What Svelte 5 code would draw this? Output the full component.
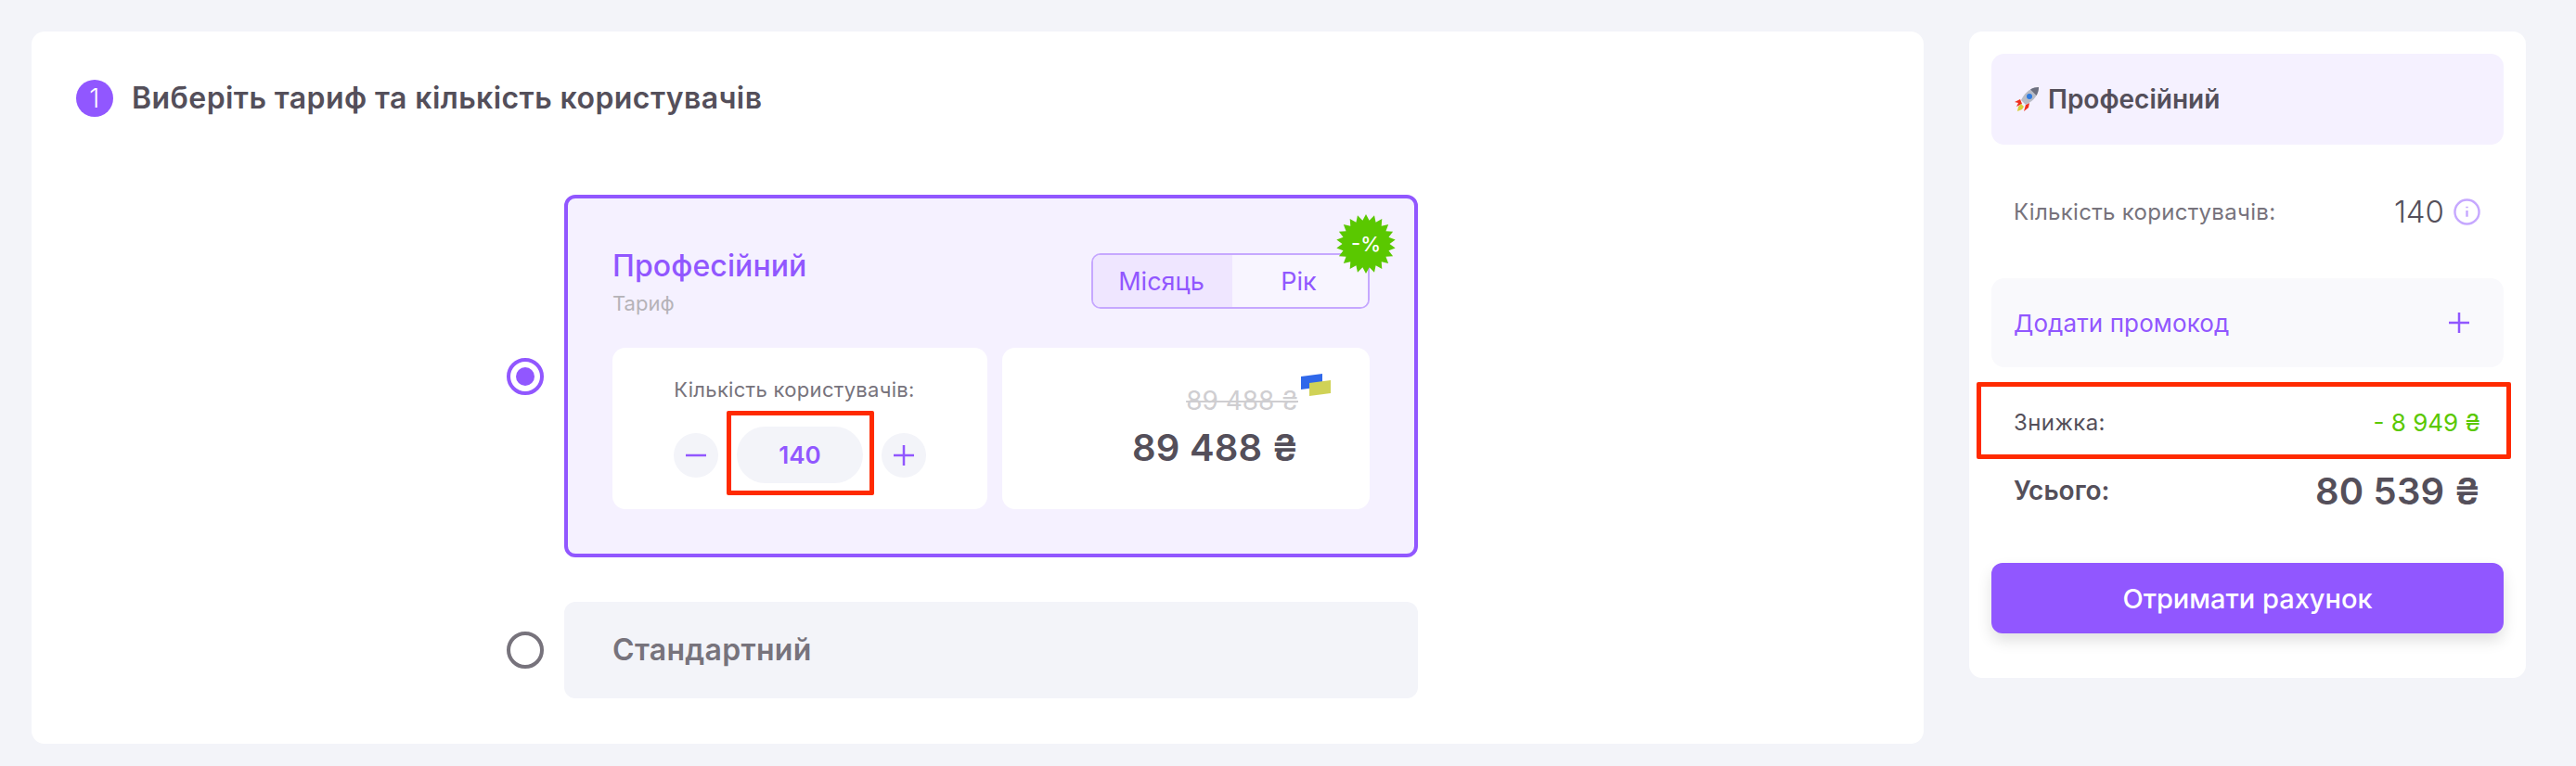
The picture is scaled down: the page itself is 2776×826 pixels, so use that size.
<script>
let months = $state(true)
let users = $state(140)

const price = 89488
const discount = 8949

function money(n) {
  return String(n).replace(/\B(?=(\d{3})+$)/g, ' ') + ' ₴'
}

// badge outline, alternating outer and inner radius
function burst(count, outer, inner) {
  const pts = []
  for (let i = 0; i < count * 2; i++) {
    const r = i % 2 ? inner : outer
    const a = (Math.PI * i) / count - Math.PI / 2
    pts.push((32 + r * Math.cos(a)).toFixed(2) + ',' + (32 + r * Math.sin(a)).toFixed(2))
  }
  return pts.join(' ')
}
</script>

<div class="page">
  <main class="card main">
    <h2 class="heading"><span class="step">1</span>Виберіть тариф та кількість користувачів</h2>

    <div class="plans">
      <div class="plan-row">
        <span class="radio active"></span>
        <section class="plan">
          <svg class="badge" viewBox="0 0 64 64" aria-hidden="true">
            <polygon points={burst(22, 32, 25.5)} fill="#5ac800" />
          </svg>
          <span class="badge-text">-%</span>

          <div class="plan-head">
            <div class="plan-name">
              <div class="plan-title">Професійний</div>
              <div class="plan-sub">Тариф</div>
            </div>
            <div class="period">
              <button class:on={months} onclick={() => months = true}>Місяць</button>
              <button class:on={!months} onclick={() => months = false}>Рік</button>
            </div>
          </div>

          <div class="plan-body">
            <div class="box qty">
              <div class="qty-label">Кількість користувачів:</div>
              <div class="qty-controls">
                <button class="round" onclick={() => users--} aria-label="minus">
                  <svg viewBox="0 0 22 22"><path d="M0 11h22" /></svg>
                </button>
                <span class="qty-value">{users}</span>
                <button class="round" onclick={() => users++} aria-label="plus">
                  <svg viewBox="0 0 22 22"><path d="M0 11h22M11 0v22" /></svg>
                </button>
              </div>
            </div>

            <div class="box prices">
              <div class="old-price">
                {money(price)}
                <svg class="flag" viewBox="0 0 32 24" aria-hidden="true">
                  <polygon points="0,3 23,0 23,14 0,17" fill="#3068ea" />
                  <polygon points="9,10 32,7 32,21 9,24" fill="#d0d256" />
                </svg>
              </div>
              <div class="new-price">{money(price)}</div>
            </div>
          </div>
        </section>
      </div>

      <div class="plan-row">
        <span class="radio"></span>
        <section class="plan-closed">Стандартний</section>
      </div>
    </div>
  </main>

  <aside class="card side">
    <div class="side-head">
      <svg class="rocket" viewBox="0 0 28 28" aria-hidden="true">
        <path d="M7 14 1 17l4 1-2 4 6-3z" fill="#f0301e" />
        <path d="M13 20l-2 7 5-4 1-5z" fill="#f0301e" />
        <path d="M5 22l-1 5 5-2 2-3-3-3z" fill="#d8cf3c" />
        <path d="M27 1c-7 0-14 4-19 14l5 5C23 15 27 8 27 1z" fill="#b9bcc6" />
        <path d="M27 1c-3 0-6 .8-9 2.400L24.600 10C26.200 7 27 4 27 1z" fill="#6d7080" />
        <circle cx="17" cy="11" r="3" fill="#2f7be0" />
      </svg>
      Професійний
    </div>

    <div class="row users">
      <span class="users-label">Кількість користувачів:</span>
      <span class="users-value">
        {users}
        <svg class="info" viewBox="0 0 30 30" aria-hidden="true">
          <circle cx="15" cy="15" r="13.500" />
          <path d="M15 13.500v7M15 9v1.500" />
        </svg>
      </span>
    </div>

    <div class="promo">
      Додати промокод
      <svg viewBox="0 0 22 22" aria-hidden="true"><path d="M0 11h22M11 0v22" /></svg>
    </div>

    <div class="row discount">
      <span>Знижка:</span>
      <span class="discount-value">- {money(discount)}</span>
    </div>

    <div class="row total">
      <span>Усього:</span>
      <span class="total-value">{money(price - discount)}</span>
    </div>

    <button class="submit">Отримати рахунок</button>
  </aside>

  <!-- red annotation frames from the screenshot -->
  <div class="mark mark-qty"></div>
  <div class="mark mark-discount"></div>
</div>

<style>
:global(body) {
  margin: 0;
  background: #f3f4f9;
  font-family: Inter, "Noto Sans", sans-serif;
  color: #544f5a;
}

button {
  font: inherit;
  border: 0;
  padding: 0;
  cursor: pointer;
}

.page {
  position: relative;
  display: flex;
  align-items: flex-start;
  gap: 49px;
  padding: 34px;
  width: 2776px;
  height: 826px;
  box-sizing: border-box;
}

.card {
  background: #fff;
  border-radius: 14px;
  box-sizing: border-box;
}

.main {
  width: 2039px;
  padding: 52px 48px 49px;
}

.heading {
  display: flex;
  align-items: center;
  gap: 20px;
  margin: 0;
  font-size: 32px;
  line-height: 40px;
  font-weight: 600;
  letter-spacing: 0.42px;
}

.step {
  width: 40px;
  height: 40px;
  border-radius: 50%;
  background: #9157ff;
  color: #fff;
  font-size: 28px;
  font-weight: 300;
  text-align: center;
}

.plans {
  display: flex;
  flex-direction: column;
  gap: 48px;
  width: 982px;
  margin: 84px 0 0 464px;
}

.plan-row {
  display: flex;
  align-items: center;
  gap: 22px;
}

.radio {
  flex: none;
  width: 40px;
  height: 40px;
  border: 4px solid #77737c;
  border-radius: 50%;
  box-sizing: border-box;
  background: #fff;
}

.radio.active {
  border-color: #9157ff;
  padding: 6px;
  background: #9157ff content-box;
}

.plan {
  position: relative;
  flex: 1;
  padding: 59px 48px 48px;
  border: 4px solid #9157ff;
  border-radius: 12px;
  background: #f5f1ff;
}

.badge {
  position: absolute;
  top: 17px;
  right: 20px;
  width: 64px;
  height: 64px;
  z-index: 1;
}

.badge-text {
  position: absolute;
  top: 17px;
  right: 20px;
  z-index: 1;
  width: 64px;
  color: #fff;
  font-size: 22px;
  line-height: 64px;
  font-weight: 500;
  text-align: center;
}

.plan-head {
  display: flex;
  justify-content: space-between;
  align-items: flex-start;
}

.plan-name {
  margin: -6px 0 -8px;
}

.plan-title {
  color: #9157ff;
  font-size: 32px;
  line-height: 40px;
  font-weight: 500;
  letter-spacing: 0.1px;
}

.plan-sub {
  margin-top: 6px;
  color: #b5b3b8;
  font-size: 22px;
  line-height: 28px;
}

.period {
  display: flex;
  width: 300px;
  height: 60px;
  border: 2px solid #c6a8ff;
  border-radius: 10px;
  box-sizing: border-box;
  overflow: hidden;
}

.period button {
  padding-right: 3px;
  color: #9157ff;
  background: #f8f5ff;
  font-size: 27px;
}

.period button:first-child {
  width: 150px;
}

.period button:last-child {
  flex: 1;
}

.period button.on {
  background: #efe6ff;
}

.plan-body {
  display: flex;
  gap: 16px;
  margin-top: 42px;
}

.box {
  height: 174px;
  border-radius: 14px;
  background: #fff;
  box-sizing: border-box;
}

.qty {
  width: 404px;
  padding-top: 31px;
}

.qty-label {
  padding-right: 12px;
  color: #77737c;
  font-size: 22px;
  line-height: 28px;
  letter-spacing: 0.3px;
  text-align: center;
}

.qty-controls {
  display: flex;
  justify-content: center;
  align-items: center;
  gap: 20px;
  margin-top: 26px;
}

.round {
  width: 48px;
  height: 48px;
  border-radius: 50%;
  background: #f3f4f9;
}

.round svg {
  display: block;
  width: 22px;
  height: 22px;
  margin: auto;
}

.round path,
.promo path {
  fill: none;
  stroke: #9157ff;
  stroke-width: 2.500;
}

.qty-value {
  width: 136px;
  height: 61px;
  border-radius: 31px;
  background: #f3f4f9;
  color: #9157ff;
  font-size: 26px;
  line-height: 61px;
  font-weight: 600;
  text-align: center;
}

.prices {
  flex: 1;
  display: flex;
  flex-direction: column;
  align-items: flex-end;
  padding: 42px 77px 0 0;
}

.old-price {
  position: relative;
  color: #cfced1;
  font-size: 28px;
  line-height: 30px;
  text-decoration: line-through;
}

.flag {
  position: absolute;
  top: -14px;
  right: -35px;
  width: 32px;
  height: 24px;
}

.new-price {
  margin-top: 16px;
  font-size: 40px;
  line-height: 40px;
  font-weight: 600;
  letter-spacing: 0.2px;
}

.plan-closed {
  flex: 1;
  padding: 0 52px;
  height: 104px;
  border-radius: 12px;
  background: #f3f4f9;
  color: #77737c;
  font-size: 32px;
  line-height: 104px;
  font-weight: 600;
  letter-spacing: 0.3px;
}

.side {
  width: 600px;
  height: 697px;
  padding: 24px;
}

.side-head {
  display: flex;
  align-items: center;
  gap: 9px;
  height: 98px;
  padding-left: 24px;
  border-radius: 14px;
  background: #f5f1ff;
  font-size: 28px;
  font-weight: 600;
}

.rocket {
  width: 28px;
  height: 28px;
}

.row {
  display: flex;
  justify-content: space-between;
  align-items: center;
  padding: 0 25px 0 24px;
}

.users {
  height: 144px;
}

.users-label {
  color: #77737c;
  font-size: 24px;
  letter-spacing: 0.3px;
}

.users-value {
  display: flex;
  align-items: center;
  gap: 10px;
  font-size: 33px;
  font-weight: 300;
}

.info {
  width: 29px;
  height: 29px;
}

.info circle,
.info path {
  fill: none;
  stroke: #c6a8ff;
  stroke-width: 2.500;
}

.promo {
  display: flex;
  justify-content: space-between;
  align-items: center;
  height: 96px;
  padding: 0 37px 0 24px;
  border-radius: 14px;
  background: #f9f9fc;
  color: #9157ff;
  font-size: 26px;
  letter-spacing: 0.1px;
}

.promo svg {
  width: 22px;
  height: 22px;
}

.discount {
  height: 60px;
  margin-top: 29px;
  font-size: 24px;
  letter-spacing: 0.4px;
}

.discount-value {
  color: #5ac800;
  font-size: 26px;
  letter-spacing: 0;
}

.total {
  height: 60px;
  margin-top: 14px;
  font-size: 28px;
  font-weight: 600;
}

.total-value {
  font-size: 40px;
  letter-spacing: 0.2px;
}

.submit {
  display: block;
  width: 100%;
  height: 76px;
  margin-top: 48px;
  border-radius: 12px;
  background: #9157ff;
  color: #fff;
  font-size: 29px;
  font-weight: 500;
  box-shadow: 0 8px 16px rgba(0, 0, 0, 0.12);
}

.mark {
  position: absolute;
  border: 5px solid #ff2a00;
  border-radius: 2px;
  box-sizing: border-box;
  pointer-events: none;
}

.mark-qty {
  left: 783px;
  top: 443px;
  width: 159px;
  height: 91px;
}

.mark-discount {
  left: 2130px;
  top: 412px;
  width: 576px;
  height: 83px;
}
</style>
